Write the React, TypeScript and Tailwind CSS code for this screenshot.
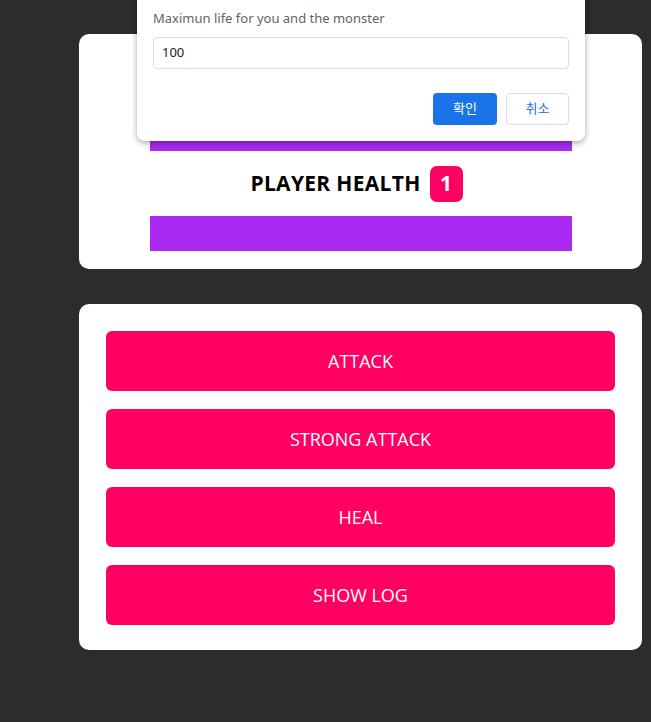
import React from "react";

export default function App() {
  const buttons = ["ATTACK", "STRONG ATTACK", "HEAL", "SHOW LOG"];
  return (
    <div
      className="relative min-h-[722px] w-full bg-[#2c2c2c] overflow-hidden"
      style={{ fontFamily: '"Open Sans", "Noto Sans", sans-serif' }}
    >
      <div className="pt-[34px] pl-[79px] pr-[9px] flex flex-col gap-[35px]">
        <section className="bg-white rounded-[10px] pt-[17px] pb-[18px] flex flex-col items-center">
          <div className="h-[65px] flex items-center justify-center gap-[9px]">
            <h2 className="text-[21px] font-bold text-black">MONSTER HEALTH</h2>
          </div>
          <div className="w-[422px] h-[35px] bg-[#a82af2]" />
          <div className="h-[65px] flex items-center justify-center gap-[9px] pr-[8px]">
            <h2 className="text-[21px] font-bold text-black tracking-[0.3px]">PLAYER HEALTH</h2>
            <span className="w-[33px] h-[36px] rounded-[7px] bg-[#ff0062] text-white text-[21px] font-bold flex items-center justify-center">
              1
            </span>
          </div>
          <div className="w-[422px] h-[35px] bg-[#a82af2]" />
        </section>

        <section className="bg-white rounded-[10px] px-[27px] pt-[27px] pb-[25px] flex flex-col gap-[18px]">
          {buttons.map((b) => (
            <button
              key={b}
              className="h-[60px] w-full rounded-[6px] bg-[#ff0062] text-white text-[18px] flex items-center justify-center"
            >
              {b}
            </button>
          ))}
        </section>
      </div>

      <div
        className="absolute left-[137px] top-[-60px] w-[448px] h-[201px] bg-white rounded-[8px] shadow-[0_2px_6px_rgba(0,0,0,0.35)] px-[16px] pt-[69px]"
        style={{ fontFamily: '"Noto Sans", "Noto Sans CJK KR", sans-serif' }}
      >
        <p className="text-[13px] leading-[18px] text-[#5f6368]">Maximun life for you and the monster</p>
        <div className="mt-[10px] h-[32px] w-full border border-[#dadce0] rounded-[4px] flex items-center px-[8px] text-[13px] text-[#202124]">
          100
        </div>
        <div className="mt-[24px] flex justify-end gap-[9px]">
          <button className="w-[64px] h-[32px] rounded-[4px] bg-[#1a73e8] text-white text-[13px]">확인</button>
          <button className="w-[63px] h-[32px] rounded-[4px] border border-[#dadce0] bg-white text-[#1a73e8] text-[13px]">취소</button>
        </div>
      </div>
    </div>
  );
}
